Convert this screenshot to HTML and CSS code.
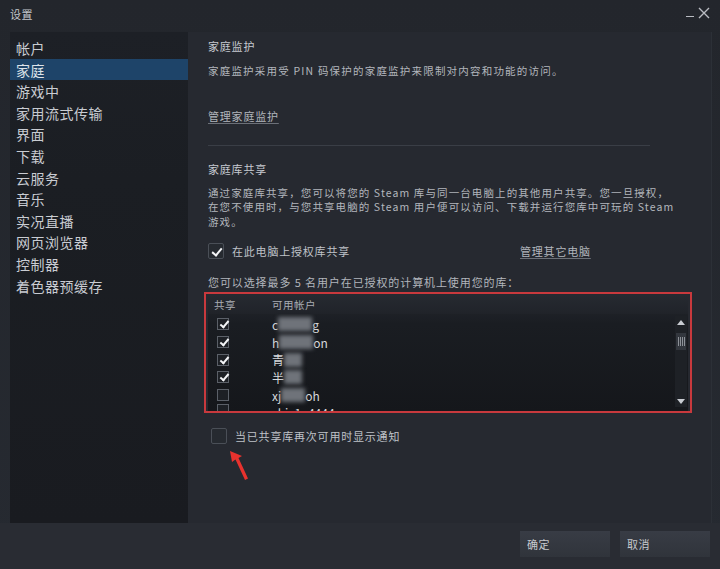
FILE: index.html
```html
<!DOCTYPE html>
<html lang="zh-CN">
<head>
    <meta charset="UTF-8">
    <title>设置</title>
    <link rel="stylesheet" href="styles.css">
</head>
<body>
    <div class="window">
        <div class="titlebar">
            <span class="title">设置</span>
            <div class="controls">
                <span class="min"></span>
                <svg class="close" width="12" height="12" viewBox="0 0 12 12"><path d="M1 1L11 11M11 1L1 11" stroke="#b9bcc2" stroke-width="1.4"/></svg>
            </div>
        </div>

        <div class="main">
            <ul class="sidebar">
                <li>帐户</li>
                <li class="active">家庭</li>
                <li>游戏中</li>
                <li>家用流式传输</li>
                <li>界面</li>
                <li>下载</li>
                <li>云服务</li>
                <li>音乐</li>
                <li>实况直播</li>
                <li>网页浏览器</li>
                <li>控制器</li>
                <li>着色器预缓存</li>
            </ul>

            <div class="content">
                <div class="heading">家庭监护</div>
                <p class="desc">家庭监护采用受 PIN 码保护的家庭监护来限制对内容和功能的访问。</p>
                <a class="link manage">管理家庭监护</a>
                <div class="divider"></div>

                <div class="heading">家庭库共享</div>
                <p class="desc long">通过家庭库共享，您可以将您的 Steam 库与同一台电脑上的其他用户共享。您一旦授权，<br>在您不使用时，与您共享电脑的 Steam 用户便可以访问、下载并运行您库中可玩的 Steam<br>游戏。</p>

                <div class="auth-row">
                    <label class="check-label">
                        <span class="box checked big"></span>
                        在此电脑上授权库共享
                    </label>
                    <a class="link other">管理其它电脑</a>
                </div>

                <p class="desc pick">您可以选择最多 5 名用户在已授权的计算机上使用您的库：</p>

                <div class="highlight">
                    <div class="table">
                        <div class="thead">
                            <span class="col-share">共享</span>
                            <span class="col-name">可用帐户</span>
                        </div>
                        <div class="tbody">
                            <div class="rows">
                                <div class="row"><span class="col-share"><span class="box checked"></span></span><span class="col-name">c<i class="blur w40"></i>g</span></div>
                                <div class="row"><span class="col-share"><span class="box checked"></span></span><span class="col-name">h<i class="blur w40"></i>on</span></div>
                                <div class="row"><span class="col-share"><span class="box checked"></span></span><span class="col-name">青<i class="blur w20"></i></span></div>
                                <div class="row"><span class="col-share"><span class="box checked"></span></span><span class="col-name">半<i class="blur w20"></i></span></div>
                                <div class="row"><span class="col-share"><span class="box"></span></span><span class="col-name">xj<i class="blur w30"></i>oh</span></div>
                                <div class="row last"><span class="col-share"><span class="box"></span></span><span class="col-name">zhiy1a4444</span></div>
                            </div>
                            <div class="scrollbar">
                                <svg width="8" height="5" viewBox="0 0 8 5"><path d="M0 5L4 0L8 5Z" fill="#c9ccd2"/></svg>
                                <div class="thumb"><span></span><span></span><span></span><span></span></div>
                                <div class="track"></div>
                                <svg width="8" height="5" viewBox="0 0 8 5"><path d="M0 0L4 5L8 0Z" fill="#c9ccd2"/></svg>
                            </div>
                        </div>
                    </div>
                </div>

                <label class="check-label notify">
                    <span class="box big"></span>
                    当已共享库再次可用时显示通知
                </label>

                <svg class="arrow" width="24" height="34" viewBox="0 0 24 34">
                    <path d="M2 2L4 13L7.5 10.5L17 31L20 29.5L10.5 9L14 7Z" fill="#e8322e"/>
                </svg>
            </div>
        </div>

        <div class="footer">
            <button class="btn">确定</button>
            <button class="btn">取消</button>
        </div>
    </div>
</body>
</html>
```

FILE: styles.css
```css
* {
    box-sizing: border-box;
}

body {
    margin: 0;
    background-color: #22252b;
    font-family: "Noto Sans CJK SC", "Liberation Sans", sans-serif;
    color: #c6c9cf;
}

.window {
    width: 720px;
    height: 569px;
    display: flex;
    flex-direction: column;
    background: linear-gradient(#23262c, #262a31);
    overflow: hidden;
}

.titlebar {
    height: 32px;
    display: flex;
    align-items: center;
    justify-content: space-between;
    padding: 0 10px 4px 10px;
}

.title {
    font-size: 11px;
    letter-spacing: 0.5px;
    color: #c3c6cc;
}

.controls {
    display: flex;
    align-items: center;
    gap: 4px;
    margin-top: -2px;
}

.min {
    width: 8px;
    height: 1px;
    background-color: #b9bcc2;
    margin-top: 7px;
}

.main {
    flex: 1;
    display: flex;
    padding-left: 10px;
}

.sidebar {
    width: 178px;
    margin: 0;
    padding: 5px 0 0 0;
    list-style: none;
    background: linear-gradient(#1d2026, #1b1e23 30%, #191b20);
    height: 491px;
}

.sidebar li {
    height: 21.6px;
    line-height: 22px;
    padding-left: 6px;
    font-size: 14px;
    letter-spacing: 0.5px;
    color: #c9ccd2;
}

.sidebar li.active {
    background-color: #1e4469;
    color: #dde3ea;
}

.content {
    flex: 1;
    position: relative;
    padding: 7px 0 0 20px;
    margin-right: 8px;
    background-color: #262930;
    border-right: 1px solid #2c3037;
}

.heading {
    font-size: 11px;
    line-height: 14px;
    letter-spacing: 0.8px;
    color: #c7cad0;
}

.desc {
    margin: 0;
    font-size: 10.5px;
    line-height: 14.5px;
    letter-spacing: 1.2px;
    color: #b2b6bc;
    white-space: nowrap;
}

.content > .desc:first-of-type {
    margin-top: 11px;
}

.link {
    display: inline-block;
    font-size: 11px;
    letter-spacing: 0.8px;
    color: #b2b6bc;
    text-decoration: underline;
    text-decoration-color: #6c7078;
    text-underline-offset: 2px;
}

.manage {
    margin-top: 29px;
}

.divider {
    height: 1px;
    width: 442px;
    background-color: #3a3e46;
    margin: 19px 0 16px 0;
}

.desc.long {
    margin-top: 10px;
    letter-spacing: 1.1px;
}

.auth-row {
    display: flex;
    align-items: center;
    margin-top: 13px;
    height: 18px;
}

.auth-row .other {
    margin-left: 170px;
}

.check-label {
    display: flex;
    align-items: center;
    gap: 8px;
    font-size: 11px;
    letter-spacing: 0.8px;
    color: #bfc2c8;
}

.box {
    display: inline-block;
    width: 12px;
    height: 12px;
    border: 1px solid #5b6068;
    background-color: #1d2025;
    position: relative;
}

.box.big {
    width: 16px;
    height: 16px;
    border-radius: 2px;
    border-color: #4a4f57;
    background-color: #262a30;
}

.box.checked::after {
    content: "";
    position: absolute;
    left: 3.5px;
    top: 0px;
    width: 3px;
    height: 7px;
    border: solid #f4f5f7;
    border-width: 0 2px 2px 0;
    transform: rotate(40deg);
}

.box.big.checked::after {
    left: 5px;
    top: 1.5px;
    width: 4px;
    height: 8px;
}

.desc.pick {
    margin-top: 15px;
    font-size: 11px;
    letter-spacing: 0.9px;
}

.highlight {
    width: 488px;
    height: 121px;
    margin: 2px 0 0 -4px;
    border: 2px solid #c8393d;
    padding: 1px 2px 0 2px;
}

.table {
    height: 100%;
    background: linear-gradient(#24272e, #1a1d22 25%, #15171b);
}

.thead {
    height: 19px;
    display: flex;
    align-items: center;
    font-size: 10.5px;
    letter-spacing: 0.5px;
    color: #a9adb4;
    background: linear-gradient(#262a31, #202329);
}

.col-share {
    width: 64px;
    padding-left: 6px;
    display: flex;
    align-items: center;
}

.col-name {
    display: flex;
    align-items: center;
}

.tbody {
    display: flex;
    height: 97px;
    overflow: hidden;
}

.rows {
    flex: 1;
    padding-top: 2px;
}

.row {
    height: 17.7px;
    display: flex;
    align-items: center;
    font-size: 12px;
    color: #d7d9dd;
}

.row.last {
    height: 14px;
    overflow: hidden;
    align-items: flex-start;
}

.row .col-share {
    padding-left: 9px;
}

.blur {
    display: inline-block;
    height: 14px;
    background-color: #6f737a;
    filter: blur(2px);
}

.w40 { width: 34px; }
.w30 { width: 24px; }
.w20 { width: 18px; }

.scrollbar {
    width: 12px;
    margin: 2px 1px 4px 0;
    background-color: #1e2126;
    display: flex;
    flex-direction: column;
    align-items: center;
    padding: 4px 0 3px 0;
}

.thumb {
    width: 10px;
    height: 17px;
    margin-top: 8px;
    background-color: #33373e;
    display: flex;
    justify-content: center;
    align-items: center;
    gap: 1px;
}

.thumb span {
    width: 1px;
    height: 9px;
    background-color: #8d9198;
}

.track {
    flex: 1;
}

.notify {
    margin-top: 15px;
    margin-left: 3px;
}

.arrow {
    position: absolute;
    left: 40px;
    top: 417px;
}

.footer {
    height: 46px;
    display: flex;
    justify-content: flex-end;
    align-items: flex-start;
    gap: 10px;
    padding: 8px 10px 0 0;
    background-color: #292c33;
}

.btn {
    width: 90px;
    height: 26px;
    border: 0;
    background: linear-gradient(#383c45, #30343b);
    color: #c6c9ce;
    font-family: "Noto Sans CJK SC", "Liberation Sans", sans-serif;
    font-size: 11px;
    letter-spacing: 0.5px;
    text-align: left;
    padding-left: 7px;
}
```
